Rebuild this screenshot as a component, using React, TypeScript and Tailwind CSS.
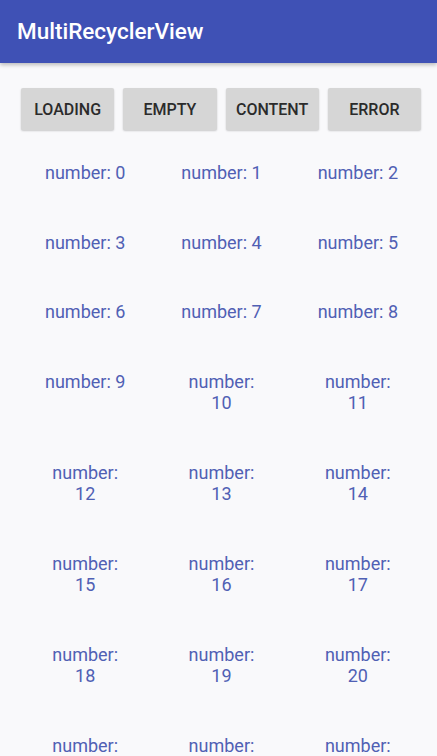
import type { FC } from "react";

const buttons = ["LOADING", "EMPTY", "CONTENT", "ERROR"];
const numbers = Array.from({ length: 24 }, (_, i) => i);

const NumberCell: FC<{ value: number }> = ({ value }) => (
  <div className="flex justify-center py-[24px]">
    <span className="max-w-[86px] text-center text-[18px] leading-[21.5px] text-[#5060b4]">
      number: {value}
    </span>
  </div>
);

export default function App() {
  return (
    <div
      className="flex h-[756px] w-[437px] flex-col overflow-hidden bg-[#f9f9fb]"
      style={{ fontFamily: "Roboto, 'Liberation Sans', sans-serif" }}
    >
      <header className="relative z-10 flex h-[63px] shrink-0 items-center bg-[#3f51b5] pl-[17px] shadow-[0_2px_4px_rgba(0,0,0,0.25)]">
        <h1 className="text-[22.5px] font-medium text-white">MultiRecyclerView</h1>
      </header>

      <div className="flex gap-[9px] pl-[21px] pr-[16px] pt-[25px]">
        {buttons.map((label) => (
          <button
            key={label}
            className="h-[42px] flex-1 rounded-[2px] bg-[#d6d6d6] pt-[2px] text-[16px] font-medium text-[#2b2b2b] shadow-[0_1px_2px_rgba(0,0,0,0.2)]"
          >
            {label}
          </button>
        ))}
      </div>

      <div className="grid grid-cols-3 pl-[17px] pr-[11px] pt-[8px]">
        {numbers.map((n) => (
          <NumberCell key={n} value={n} />
        ))}
      </div>
    </div>
  );
}
